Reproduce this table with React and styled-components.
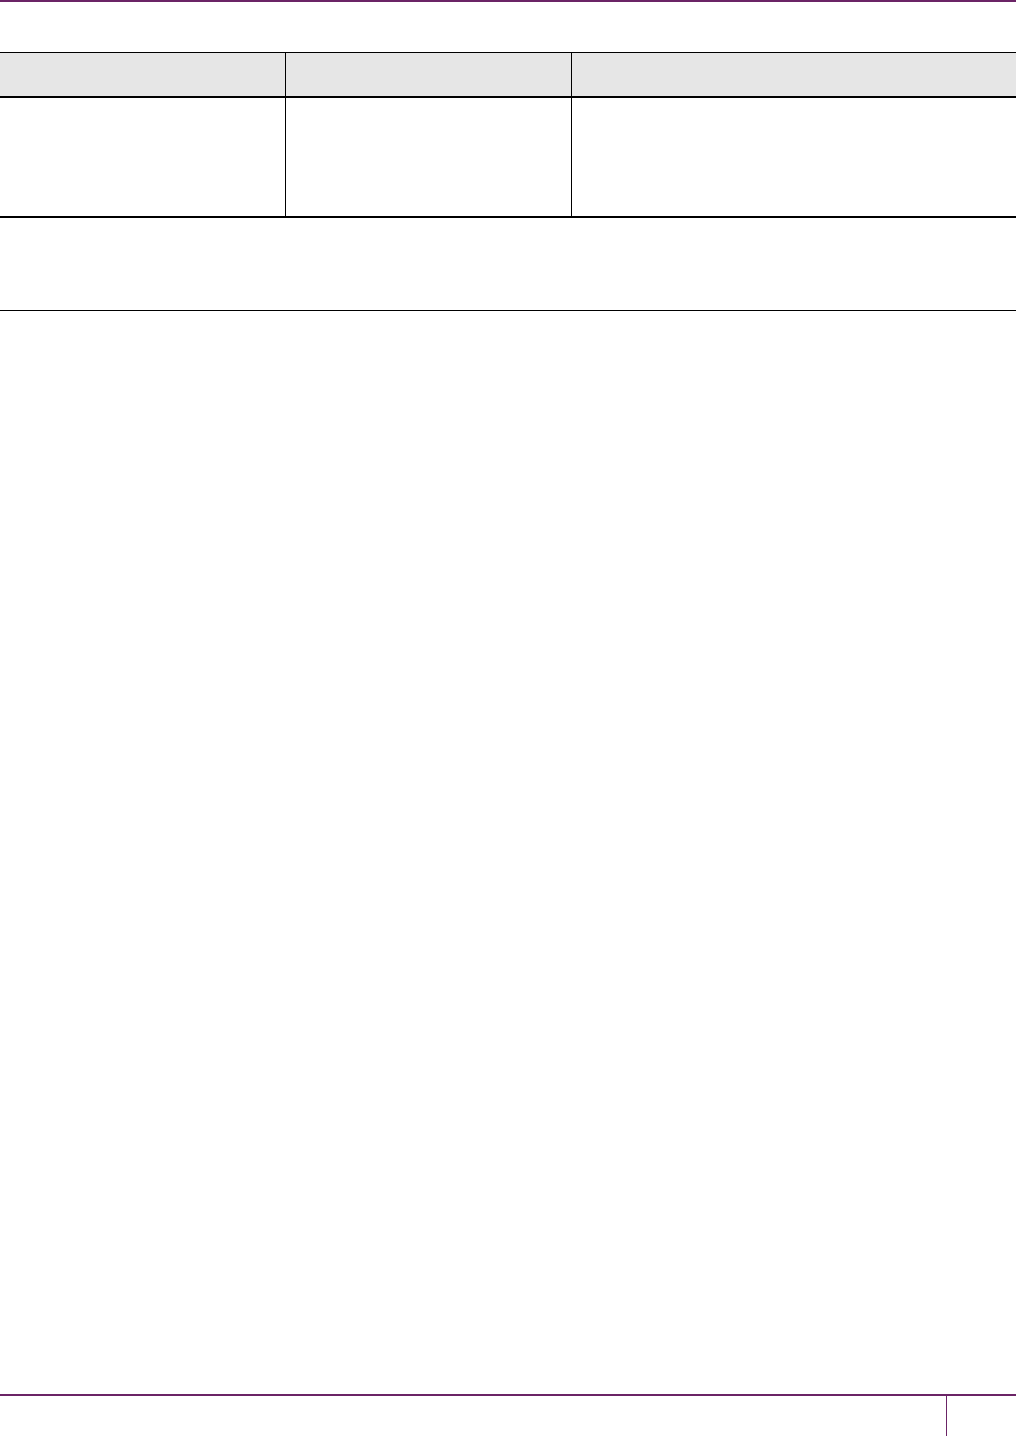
import React from "react";
import styled, { createGlobalStyle } from "styled-components";

const Global = createGlobalStyle`
  html, body { margin: 0; padding: 0; background: #fff; }
  body { font-family: "Liberation Sans", Arial, sans-serif; color: #000; }
`;

const Page = styled.div`
  width: 1016px;
  height: 1436px;
  display: flex;
  flex-direction: column;
  overflow: hidden;
`;

const TopRule = styled.div`
  height: 2px;
  background: #6b2466;
`;

const Table = styled.div`
  margin-top: 50px;
  border-top: 1px solid #000;
  border-bottom: 2px solid #000;
`;

const Row = styled.div`
  display: grid;
  grid-template-columns: 286px 286px 1fr;
  height: ${(p) => p.$height}px;
  background: ${(p) => (p.$head ? "#e6e6e6" : "#fff")};
  border-bottom: ${(p) => (p.$head ? "2px solid #000" : "none")};
`;

const Cell = styled.div`
  border-right: 1px solid #000;
  &:last-child { border-right: none; }
`;

const Note = styled.div`
  height: 92px;
  border-bottom: 1px solid #000;
`;

const Footer = styled.div`
  margin-top: auto;
  border-top: 2px solid #6b2466;
  height: 40px;
  display: flex;
`;

const FooterText = styled.div`
  width: 946px;
  border-right: 1px solid #6b2466;
`;

const PageNum = styled.div`
  flex: 1;
`;

export default function App() {
  return (
    <>
      <Global />
      <Page>
        <TopRule />
        <Table>
          <Row $head $height={43}>
            <Cell />
            <Cell />
            <Cell />
          </Row>
          <Row $height={118}>
            <Cell />
            <Cell />
            <Cell />
          </Row>
        </Table>
        <Note />
        <Footer>
          <FooterText />
          <PageNum />
        </Footer>
      </Page>
    </>
  );
}
